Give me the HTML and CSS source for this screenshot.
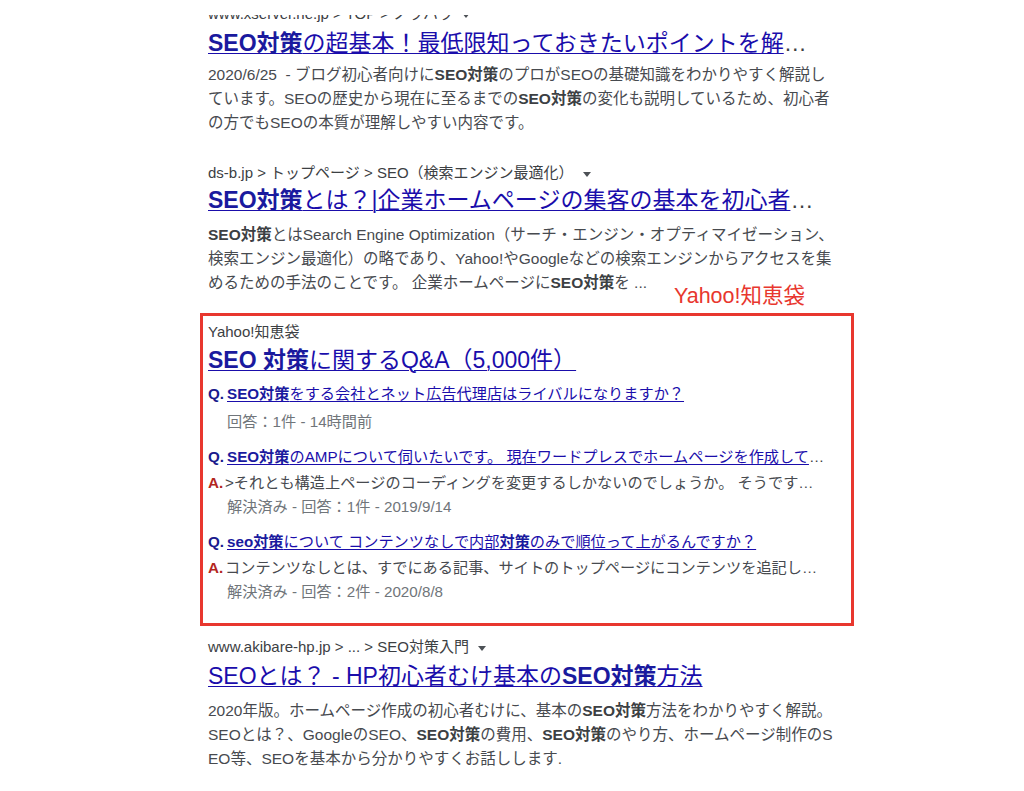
FILE: index.html
```html
<!DOCTYPE html>
<html lang="ja">
<head>
<meta charset="utf-8">
<title>SEO対策 検索結果</title>
<link rel="stylesheet" href="styles.css">
</head>
<body>
<div class="page">
  <div class="result first">
    <div class="crumb">www.xserver.ne.jp &gt; TOP &gt; ノウハウ<span class="tri"></span></div>
    <div class="title"><a href="#"><b>SEO対策</b>の超基本！最低限知っておきたいポイントを解</a>…</div>
    <div class="snippet"><span class="date">2020/6/25</span>&nbsp; - ブログ初心者向けに<b>SEO対策</b>のプロがSEOの基礎知識をわかりやすく解説し<br>ています。SEOの歴史から現在に至るまでの<b>SEO対策</b>の変化も説明しているため、初心者<br>の方でもSEOの本質が理解しやすい内容です。</div>
  </div>

  <div class="result second">
    <div class="crumb">ds-b.jp &gt; トップページ &gt; SEO（検索エンジン最適化）<span class="tri"></span></div>
    <div class="title"><a href="#"><b>SEO対策</b>とは？|企業ホームページの集客の基本を初心者</a>…</div>
    <div class="snippet"><b>SEO対策</b>とはSearch Engine Optimization（サーチ・エンジン・オプティマイゼーション、<br>検索エンジン最適化）の略であり、Yahoo!やGoogleなどの検索エンジンからアクセスを集<br>めるための手法のことです。 企業ホームページに<b>SEO対策</b>を ...</div>
  </div>

  <div class="label-row"><span class="label">Yahoo!知恵袋</span></div>

  <div class="box">
    <div class="crumb">Yahoo!知恵袋</div>
    <div class="title"><a href="#"><b>SEO 対策</b>に関するQ&amp;A（5,000件） </a></div>

    <div class="qa qa1">
      <div class="q"><span class="mark">Q.</span><a href="#"><b>SEO対策</b>をする会社とネット広告代理店はライバルになりますか？</a></div>
      <div class="meta">回答：1件 - 14時間前</div>
    </div>

    <div class="qa">
      <div class="q"><span class="mark">Q.</span><a href="#"><b>SEO対策</b>のAMPについて伺いたいです。 現在ワードプレスでホームページを作成して</a>…</div>
      <div class="a"><span class="amark">A.</span>&gt;それとも構造上ページのコーディングを変更するしかないのでしょうか。 そうです…</div>
      <div class="meta">解決済み - 回答：1件 - 2019/9/14</div>
    </div>

    <div class="qa">
      <div class="q"><span class="mark">Q.</span><a href="#"><b>seo対策</b>について コンテンツなしで内部<b>対策</b>のみで順位って上がるんですか？</a></div>
      <div class="a"><span class="amark">A.</span>コンテンツなしとは、すでにある記事、サイトのトップページにコンテンツを追記し…</div>
      <div class="meta">解決済み - 回答：2件 - 2020/8/8</div>
    </div>
  </div>

  <div class="result after-box">
    <div class="crumb">www.akibare-hp.jp &gt; ... &gt; SEO対策入門<span class="tri"></span></div>
    <div class="title"><a href="#">SEOとは？ - HP初心者むけ基本の<b>SEO対策</b>方法</a></div>
    <div class="snippet">2020年版。ホームページ作成の初心者むけに、基本の<b>SEO対策</b>方法をわかりやすく解説。<br>SEOとは？、GoogleのSEO、<b>SEO対策</b>の費用、<b>SEO対策</b>のやり方、ホームページ制作のS<br>EO等、SEOを基本から分かりやすくお話しします.</div>
  </div>
</div>
</body>
</html>
```

FILE: styles.css
```css
html, body {
  margin: 0;
  padding: 0;
  background: #ffffff;
}

body {
  padding-top: 15px;
  font-family: "Liberation Sans", "Noto Sans CJK JP", sans-serif;
  color: #4d5156;
}

.page {
  overflow: hidden;
  padding-left: 200px;
  height: 776px;
}

.result {
  padding-left: 8px;
}

.result.first {
  margin-top: -12px;
}

.result.second {
  margin-top: 27px;
}

.result.after-box {
  margin-top: 10px;
}

.crumb {
  font-size: 15px;
  line-height: 22px;
  height: 22px;
  color: #3c4043;
  white-space: nowrap;
}

.tri {
  display: inline-block;
  width: 0;
  height: 0;
  margin-left: 9px;
  border-left: 4px solid transparent;
  border-right: 4px solid transparent;
  border-top: 5px solid #4d5156;
  vertical-align: middle;
}

.title {
  margin-top: 0;
  font-size: 23px;
  line-height: 32px;
  color: #3c4043;
  white-space: nowrap;
}

.first .title,
.after-box .title {
  margin-top: 2px;
}

.title a,
.q a {
  color: #1a0dab;
  text-decoration: underline;
  text-decoration-thickness: 1px;
  text-underline-offset: 2px;
}

.title b {
  font-weight: bold;
  color: #1a1a9e;
}

.snippet {
  margin-top: 7px;
  font-size: 15.5px;
  line-height: 24px;
  color: #474a4f;
  white-space: nowrap;
}

.first .snippet {
  margin-top: 4px;
}

.snippet b {
  color: #3c4043;
}

.label-row {
  width: 605px;
  margin-top: -9px;
  text-align: right;
  line-height: 20px;
  height: 20px;
}

.label {
  font-size: 21.5px;
  color: #e8372e;
}

.box {
  margin-top: 7px;
  width: 654px;
  box-sizing: border-box;
  border: 3px solid #e8372e;
  padding: 5px 0 19px 5px;
}

.box .title {
  margin-top: 1px;
}

.qa {
  margin-top: 11px;
}

.qa.qa1 {
  margin-top: 6px;
}

.q,
.a,
.meta {
  font-size: 15.2px;
  line-height: 24px;
  height: 24px;
  white-space: nowrap;
}

.q {
  color: #3c4043;
}

.q b {
  color: #1a1a9e;
}

.mark {
  display: inline-block;
  width: 19px;
  font-weight: bold;
  color: #1a1a8c;
}

.a {
  margin-top: 2px;
  color: #474a4f;
}

.amark {
  display: inline-block;
  width: 17px;
  font-weight: bold;
  color: #b3261e;
}

.meta {
  padding-left: 19px;
  color: #70757a;
}

.qa1 .meta {
  margin-top: 4px;
}
```
